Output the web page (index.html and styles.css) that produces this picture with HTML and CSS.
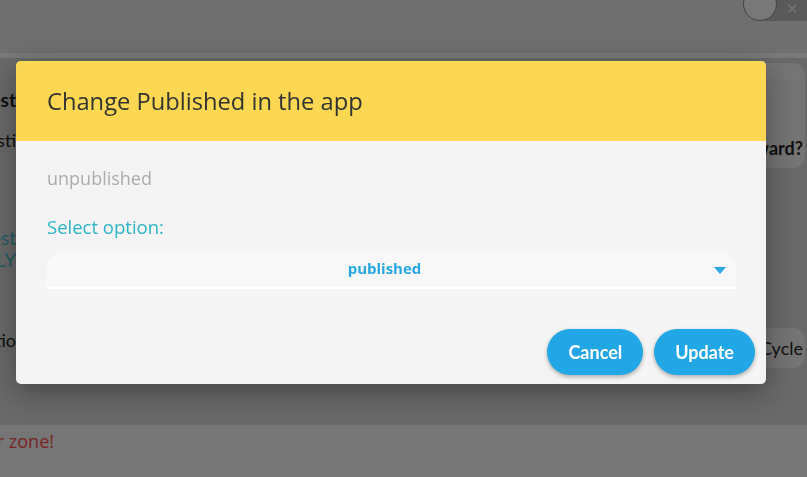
FILE: index.html
```html
<!DOCTYPE html>
<html lang="en">
<head>
<meta charset="utf-8">
<title>Change Published</title>
<link rel="stylesheet" href="styles.css">
</head>
<body>
<div class="page">
  <div class="topbar">
    <div class="toggle">
      <span class="knob"></span>
      <span class="toggle-x">&#10005;</span>
    </div>
  </div>
  <div class="strip"></div>
  <div class="content">
    <div class="left-col">
      <div class="clip heading l1"><span>Request</span></div>
      <div class="clip l2"><span>Questi</span></div>
      <div class="clip teal l3"><span>Request</span></div>
      <div class="clip teal l4"><span>ONLY</span></div>
      <div class="clip l5"><span>Conditio</span></div>
    </div>
    <div class="right-col">
      <div class="card card-a"><span class="bold">Reward?</span></div>
      <div class="card card-b"><span>Cycle</span></div>
    </div>
  </div>
  <div class="danger">
    <div class="clip wide"><span>Danger zone!</span></div>
  </div>
</div>

<div class="overlay"></div>

<div class="modal">
  <div class="modal-header">
    <h2 class="modal-title">Change Published in the app</h2>
  </div>
  <div class="modal-body">
    <p class="current">unpublished</p>
    <label class="field-label">Select option:</label>
    <div class="select">
      <span class="select-value">published</span>
      <svg class="caret" width="12" height="7" viewBox="0 0 12 7"><path d="M0 0 H12 L6 7 Z" fill="#29a7e1"/></svg>
    </div>
  </div>
  <div class="modal-footer">
    <button class="btn">Cancel</button>
    <button class="btn">Update</button>
  </div>
</div>
</body>
</html>
```

FILE: styles.css
```css
* { box-sizing: border-box; }
html, body { margin: 0; padding: 0; }
body {
  width: 807px;
  height: 477px;
  overflow: hidden;
  font-family: "Open Sans", Lato, Arial, sans-serif;
  background: #d4d4d4;
}

.page {
  height: 477px;
  display: flex;
  flex-direction: column;
  background: #d2d2d2;
}

.topbar {
  height: 53px;
  background: #dedede;
  display: flex;
  justify-content: flex-end;
  align-items: flex-start;
}
.toggle {
  margin-top: -14px;
  margin-right: -16px;
  width: 80px;
  height: 35px;
  border-radius: 18px;
  background: #b2b2b2;
  display: flex;
  align-items: center;
}
.knob {
  width: 34px;
  height: 34px;
  border-radius: 50%;
  background: #f0f0f0;
  border: 1px solid #8a8a8a;
}
.toggle-x {
  margin-left: 9px;
  margin-top: 10px;
  color: #e2e2e2;
  font-size: 15px;
  font-weight: bold;
  font-family: "DejaVu Sans", sans-serif;
}

.strip { height: 5px; background: #f2f2f2; }

.content {
  flex: 1;
  display: flex;
  justify-content: space-between;
  color: #222;
}
.left-col {
  display: flex;
  flex-direction: column;
  font-family: Lato, sans-serif;
  font-size: 18px;
  line-height: 20px;
}
.clip {
  width: 16px;
  overflow: hidden;
  display: flex;
  justify-content: flex-end;
  white-space: nowrap;
}
.clip.wide { width: 54px; }
.heading { font-weight: bold; font-size: 19px; }
.l1 { margin-top: 32px; }
.l2 { margin-top: 20px; }
.l3 { margin-top: 77px; }
.l4 { margin-top: 1px; }
.l5 { margin-top: 60px; }
.teal { color: #3cbccb; font-size: 19px; line-height: 21px; }

.right-col {
  width: 41px;
  margin-right: 2px;
  display: flex;
  flex-direction: column;
}
.card {
  background: #e8e8e8;
  border-radius: 0 12px 12px 0;
  display: flex;
  justify-content: flex-end;
  white-space: nowrap;
  overflow: hidden;
  padding-right: 2px;
  font-family: Lato, sans-serif;
  font-size: 18px;
}
.card-a {
  margin-top: 5px;
  height: 105px;
  align-items: flex-end;
  padding-bottom: 9px;
}
.card-b {
  margin-top: 160px;
  height: 40px;
  align-items: center;
}
.bold { font-weight: bold; }

.danger {
  height: 52px;
  background: #ececec;
  display: flex;
  align-items: flex-start;
  padding-top: 4px;
  color: #f04a4a;
  font-size: 18px;
}

.overlay {
  position: fixed;
  inset: 0;
  background: rgba(0, 0, 0, 0.5);
}

.modal {
  position: fixed;
  top: 61px;
  left: 16px;
  width: 750px;
  height: 323px;
  background: #f4f4f4;
  border-radius: 5px;
  overflow: hidden;
  box-shadow: 0 8px 30px rgba(0, 0, 0, 0.35);
  display: flex;
  flex-direction: column;
}
.modal-header {
  height: 80px;
  background: #fcd751;
  display: flex;
  align-items: center;
  padding-left: 31px;
}
.modal-title {
  margin: 0;
  font-weight: normal;
  font-size: 23.7px;
  color: #333;
}
.modal-body {
  padding: 27px 30px 0 30px;
}
.current {
  margin: 0 0 0 1px;
  font-size: 18px;
  line-height: 20px;
  color: #acacac;
}
.field-label {
  display: block;
  margin: 29px 0 0 1px;
  font-size: 18.5px;
  line-height: 20px;
  color: #2bb5c7;
}
.select {
  margin-top: 15px;
  height: 37px;
  padding-right: 13px;
  padding-bottom: 3px;
  background: #f8f8f8;
  border-radius: 18px 18px 0 0;
  border-bottom: 2px solid #ffffff;
  display: flex;
  align-items: center;
  justify-content: center;
  position: relative;
}
.select-value {
  font-weight: bold;
  font-size: 15px;
  color: #29a7e1;
}
.caret {
  position: absolute;
  right: 10px;
  top: 15px;
}
.modal-footer {
  margin-top: auto;
  display: flex;
  justify-content: flex-end;
  gap: 11px;
  padding: 0 11px 9px 0;
}
.btn {
  border: none;
  height: 46px;
  padding: 0 21px;
  border-radius: 23px;
  background: #22a7e6;
  color: #fff;
  font-family: Lato, sans-serif;
  font-weight: bold;
  font-size: 18px;
  box-shadow: 0 2px 4px rgba(0, 0, 0, 0.3);
}
```
